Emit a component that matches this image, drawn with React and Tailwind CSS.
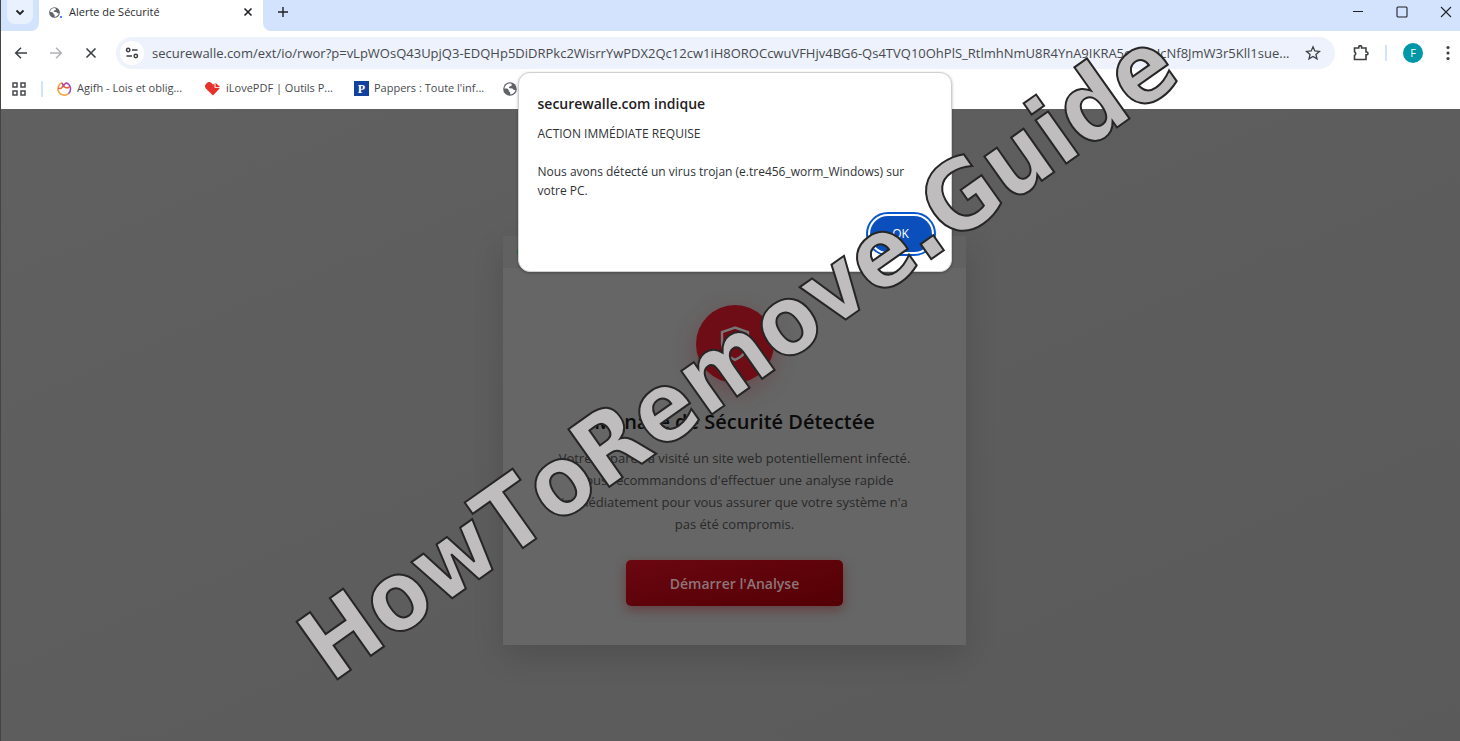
import React from "react";

const ADDRESS =
  "securewalle.com/ext/io/rwor?p=vLpWOsQ43UpjQ3-EDQHp5DiDRPkc2WisrrYwPDX2Qc12cw1iH8OROCcwuVFHjv4BG6-Qs4TVQ10OhPlS_RtlmhNmU8R4YnA9IKRA5eXf5HcNf8JmW3r5Kll1sue...";

function Icon({ size = 16, box = "0 0 16 16", width = 1.5, className = "", children }) {
  return (
    <svg
      width={size}
      height={size}
      viewBox={box}
      fill="none"
      stroke="currentColor"
      strokeWidth={width}
      className={"shrink-0 " + className}
      aria-hidden="true"
    >
      {children}
    </svg>
  );
}

function Globe({ size = 14 }) {
  return (
    <svg width={size} height={size} viewBox="0 0 14 14" className="shrink-0" aria-hidden="true">
      <circle cx="7" cy="7" r="6.8" fill="#5f6368" />
      <path
        d="M6.2 1.4C3.6 1.8 1.6 3.8 1.4 6.5l2.8.1 1.6 1.500v1.300l1.300.5.2 2.700c2.600-.2 4.700-2 5.200-4.500l-2.100-.3-1-1.300-2.800-.2-.8-1.100 1.200-1 1.500-.2.3-1.400-1-1z"
        fill="#fff"
      />
    </svg>
  );
}

function TabStrip() {
  return (
    <div className="flex h-[31px] bg-[#d3e3fd]">
      <div className="w-[38px] bg-white">
        <div className="h-full rounded-br-lg bg-[#d3e3fd] pl-[6px]">
          <button aria-label="Rechercher dans les onglets" className="flex h-6 w-[26px] items-center justify-center rounded-b-lg bg-[#e9f1fe]">
            <Icon size={10} box="0 0 10 10" width={1.8}>
              <path d="M1.500 3.500 5 7l3.500-3.500" />
            </Icon>
          </button>
        </div>
      </div>
      <div className="flex h-full w-[224px] items-center bg-white pr-[10px] pb-[7px] pl-[10px]">
        <span className="flex items-end">
          <Globe size={11} />
          <span className="size-[2px] rounded-full bg-blue-600" />
        </span>
        <span className="ml-[7px] flex-1 text-[11px] text-[#2a2c2f]">Alerte de Sécurité</span>
        <button aria-label="Fermer l'onglet">
          <Icon size={10} box="0 0 10 10" width={1.6}>
            <path d="m1.500 1.500 7 7m0-7-7 7" />
          </Icon>
        </button>
      </div>
      <div className="flex-1 bg-white">
        <div className="flex h-full rounded-bl-lg bg-[#d3e3fd]">
          <button aria-label="Nouvel onglet" className="ml-[14px] flex h-6 items-center">
            <Icon size={12} box="0 0 12 12" width={1.4}>
              <path d="M6 1v10M1 6h10" />
            </Icon>
          </button>
          <div className="ml-auto flex h-6 items-center gap-8 pr-2">
            <button aria-label="Réduire">
              <Icon size={12} box="0 0 12 12" width={1}>
                <path d="M1 5.500h10" />
              </Icon>
            </button>
            <button aria-label="Agrandir">
              <Icon size={12} box="0 0 12 12" width={1.1}>
                <rect x="1" y="1" width="10" height="10" rx="1" />
              </Icon>
            </button>
            <button aria-label="Fermer">
              <Icon size={12} box="0 0 12 12" width={1.1}>
                <path d="m1 1 10 10M11 1 1 11" />
              </Icon>
            </button>
          </div>
        </div>
      </div>
    </div>
  );
}

function Toolbar() {
  return (
    <div className="flex h-[44px] items-center pr-1 pl-3 text-[#3c4043]">
      <button aria-label="Retour">
        <Icon>
          <path d="M14 8H3m5-5.300L2.700 8 8 13.300" />
        </Icon>
      </button>
      <button aria-label="Avancer" className="ml-[19px] text-[#b0b2b5]">
        <Icon>
          <path d="M2 8h11M8 2.700 13.300 8 8 13.300" />
        </Icon>
      </button>
      <button aria-label="Arrêter" className="ml-[19px]">
        <Icon width={1.6}>
          <path d="m3.500 3.500 9 9m0-9-9 9" />
        </Icon>
      </button>
      <div className="ml-[17px] flex h-8 min-w-0 flex-1 items-center rounded-full bg-[#edf2fc] pr-[14px] pl-1">
        <button aria-label="Informations sur le site" className="flex size-6 shrink-0 items-center justify-center rounded-full bg-white">
          <Icon size={14} box="0 0 14 14" width={1.5}>
            <circle cx="3.200" cy="4" r="1.700" />
            <path d="M7 4h5.500M1.500 10H7" />
            <circle cx="10.800" cy="10" r="1.700" />
          </Icon>
        </button>
        <input
          aria-label="Adresse"
          defaultValue={ADDRESS}
          className="ml-2 h-6 min-w-0 flex-1 bg-transparent text-[13px] text-[#474a4e] outline-none"
        />
        <button aria-label="Ajouter aux favoris" className="ml-4">
          <Icon width={1.3}>
            <path d="m8 1.800 1.800 4.200 4.600.4-3.500 3 1.100 4.500L8 11.500l-4 2.400 1.100-4.500-3.500-3 4.600-.4z" />
          </Icon>
        </button>
      </div>
      <button aria-label="Extensions" className="ml-[18px]">
        <Icon width={1.6}>
          <path d="M1.500 3h4.300V2a1.400 1.400 0 0 1 2.800 0v1h4.400v4h.6a1.400 1.400 0 0 1 0 2.800H13v4.700H1.500v-4a2.100 2.100 0 0 0 0-3.800z" />
        </Icon>
      </button>
      <span className="ml-4 h-4 w-[2px] bg-[#d3e3fd]" />
      <button aria-label="Profil" className="ml-4 flex size-5 items-center justify-center rounded-full bg-[#0097a7] text-[11px] text-white">
        F
      </button>
      <button aria-label="Menu" className="ml-[17px]">
        <svg width="16" height="16" viewBox="0 0 16 16" fill="currentColor" aria-hidden="true">
          <circle cx="8" cy="2.500" r="1.600" />
          <circle cx="8" cy="8" r="1.600" />
          <circle cx="8" cy="13.500" r="1.600" />
        </svg>
      </button>
    </div>
  );
}

function Bookmarks() {
  return (
    <nav className="flex h-[34px] items-center pb-[7px] pl-[11px] text-[11px] text-[#474a4e]">
      <button aria-label="Applications">
        <Icon size={14} box="0 0 14 14" width={1.5}>
          <rect x="1" y="1" width="4" height="4" />
          <rect x="9" y="1" width="4" height="4" />
          <rect x="1" y="9" width="4" height="4" />
          <rect x="9" y="9" width="4" height="4" />
        </Icon>
      </button>
      <span className="ml-[15px] h-4 w-[2px] bg-[#d3e3fd]" />
      <a href="#agifh" className="ml-[13px] flex w-[149px] items-center gap-[5px] whitespace-nowrap">
        <svg width="16" height="16" viewBox="0 0 16 16" fill="none" strokeWidth="1.500" className="shrink-0" aria-hidden="true">
          <path d="M6 1.800A6.400 6.400 0 1 0 12.500 12.600" stroke="#f5a33b" />
          <path d="M12.500 12.600A6.400 6.400 0 0 0 10 1.800" stroke="#a14cc0" />
          <path d="M2 7c2.500 1 4.500 0 5.200-2.600C8.500 6.800 11 7.500 13.500 6" stroke="#e8603c" />
          <path d="M6 1.800 7.500 4.600 10 1.800" stroke="#c2459c" />
        </svg>
        Agifh - Lois et oblig...
      </a>
      <a href="#ilovepdf" className="flex w-[149px] items-center gap-[5px] whitespace-nowrap">
        <svg width="16" height="14" viewBox="0 0 16 14" className="shrink-0" aria-hidden="true">
          <path d="M8 13.500 1.300 7A3.900 3.900 0 0 1 7 1.500L8 2.700l1.500-1.500v4.600h5.300c-.2.600-.5 1-.9 1.500z" fill="#e5322d" />
          <path d="m10.500.7 4.600 4.300h-4.600z" fill="#e5322d" />
        </svg>
        iLovePDF | Outils P...
      </a>
      <a href="#pappers" className="flex w-[149px] items-center gap-[5px] whitespace-nowrap">
        <span className="flex size-[15px] shrink-0 items-center justify-center bg-[#12409f] font-['Liberation_Serif',serif] text-[12px] font-bold text-white">
          P
        </span>
        Pappers : Toute l'inf...
      </a>
      <Globe />
    </nav>
  );
}

function ThreatCard() {
  return (
    <section className="w-[463px] bg-[#666] shadow-[0_12px_30px_rgba(0,0,0,0.14)]">
      <header className="flex h-8 items-center bg-[#616161] pl-[14px]">
        <span className="size-2 rounded-full bg-[#1d6b35]" />
      </header>
      <div className="flex flex-col items-center px-12 pt-[37px] pb-[39px] text-center">
        <div className="flex size-[78px] items-center justify-center rounded-full bg-[#6f0d17] shadow-[0_8px_24px_rgba(111,13,23,0.3)]">
          <svg width="38" height="38" viewBox="0 0 24 24" fill="none" stroke="#777" strokeWidth="1.500" aria-hidden="true">
            <path d="M12 1.600 3.800 4.500v6.500c0 5 3.300 8.800 8.200 11 4.900-2.200 8.200-6 8.200-11V4.500z" />
          </svg>
        </div>
        <h1 className="mt-6 text-[20px] leading-[30px] font-semibold text-[#0b0b0b]">Menace de Sécurité Détectée</h1>
        <p className="mt-[10px] text-[13px] leading-[22px] text-[#292929]">
          Votre appareil a visité un site web potentiellement infecté.
          <br />
          Nous recommandons d'effectuer une analyse rapide
          <br />
          immédiatement pour vous assurer que votre système n'a
          <br />
          pas été compromis.
        </p>
        <button className="mt-[25px] h-[46px] w-[217px] rounded-[5px] bg-linear-to-br from-[#6b0711] to-[#530005] text-[14px] font-semibold text-[#8c7678] shadow-[0_4px_12px_rgba(100,0,10,0.4)]">
          Démarrer l'Analyse
        </button>
      </div>
    </section>
  );
}

function AlertDialog() {
  return (
    <div
      role="alertdialog"
      aria-labelledby="alert-title"
      aria-describedby="alert-text"
      className="w-[434px] rounded-xl border border-[#d0d0d0] bg-white px-[19px] pt-[19px] pb-[19px] shadow-[0_1px_3px_rgba(0,0,0,0.3)]"
    >
      <h2 id="alert-title" className="text-[14px] leading-6 font-semibold text-[#1f2124]">
        securewalle.com indique
      </h2>
      <p id="alert-text" className="mt-2 text-[12px] leading-[19px] text-[#303336]">
        ACTION IMMÉDIATE REQUISE
        <br />
        <br />
        Nous avons détecté un virus trojan (e.tre456_worm_Windows) sur
        <br />
        votre PC.
      </p>
      <div className="mt-4 flex justify-end">
        <button className="h-9 w-[62px] rounded-full bg-[#0b4fbd] text-[12px] text-white outline-2 outline-offset-2 outline-[#0b57d0]">OK</button>
      </div>
    </div>
  );
}

export default function App() {
  return (
    <div className="relative flex min-h-screen flex-col overflow-hidden border-l border-[#444] bg-white font-['Open_Sans','Noto_Sans',sans-serif] text-[#202124]">
      <TabStrip />
      <Toolbar />
      <Bookmarks />
      <main className="flex flex-1 justify-center bg-linear-to-br from-[#606060] to-[#5a5a5a] pt-[127px] pl-2">
        <div>
          <ThreatCard />
        </div>
      </main>
      <div className="absolute inset-x-0 top-[72px] flex justify-center pl-2">
        <AlertDialog />
      </div>
      <svg className="pointer-events-none absolute inset-0 h-full w-full" aria-hidden="true">
        <text
          transform="translate(330 684) rotate(-35.300)"
          fontFamily="DejaVu Sans Condensed"
          fontSize="97"
          fontWeight="700"
          fill="#bfbdbd"
          stroke="#262626"
          strokeWidth="2"
          className="[font-kerning:none]"
        >
          HowToRemove.Guide
        </text>
      </svg>
    </div>
  );
}
